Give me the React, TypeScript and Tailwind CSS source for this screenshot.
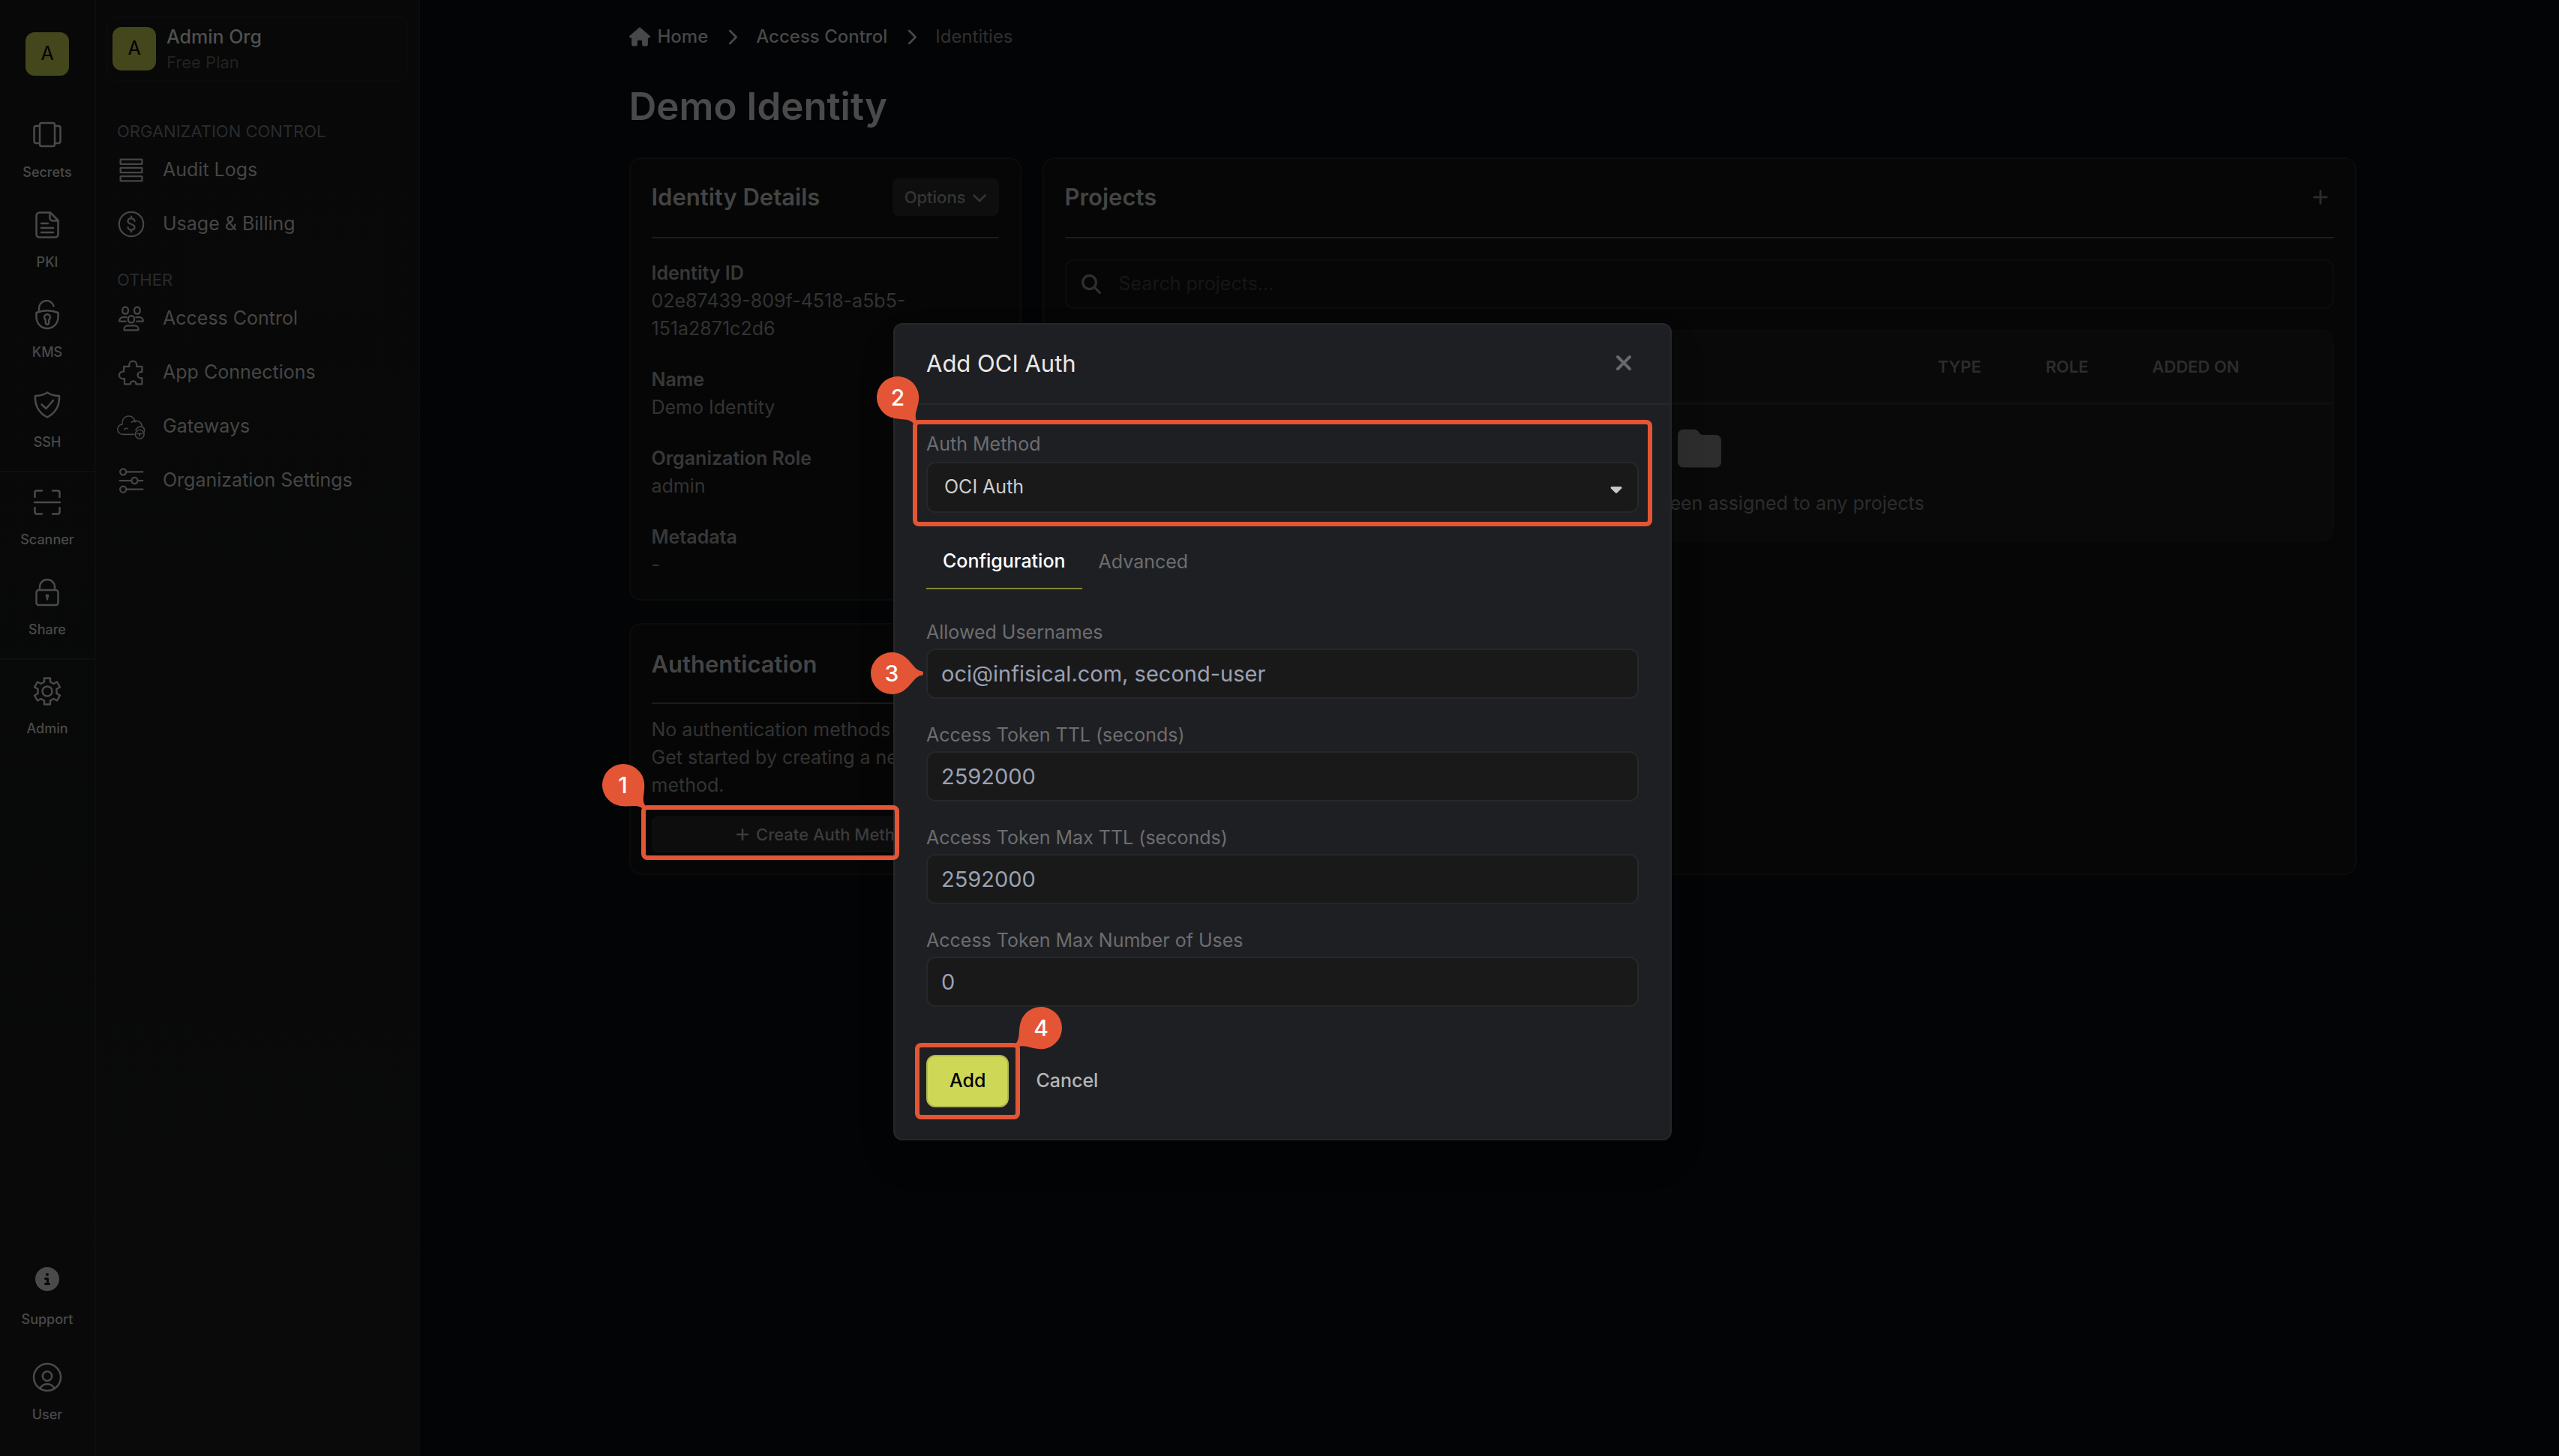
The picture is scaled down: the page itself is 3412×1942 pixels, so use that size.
import React from "react";
import { FaHouse, FaMagnifyingGlass, FaXmark, FaPlus, FaFolder, FaCircleInfo, FaCaretDown, FaChevronRight, FaChevronDown } from "react-icons/fa6";

type IconName =
  | "secrets" | "pki" | "kms" | "ssh" | "scanner" | "share" | "admin" | "user"
  | "logs" | "billing" | "access" | "puzzle" | "gateway" | "settings";

const art: Record<IconName, React.ReactNode> = {
  secrets: (
    <>
      <rect x="10" y="4" width="20" height="31" rx="2.5" />
      <path d="M10 8H5a2.500 2.500 0 0 0-2.500 2.500V28.500A2.500 2.500 0 0 0 5 31h5M30 8h5a2.500 2.500 0 0 1 2.500 2.500V28.500A2.500 2.500 0 0 1 35 31h-5" />
    </>
  ),
  pki: (
    <>
      <path d="M24 3.500H9.500a4 4 0 0 0-4 4v25a4 4 0 0 0 4 4h21a4 4 0 0 0 4-4V14z" />
      <path d="M23.500 3.500V11a3.500 3.500 0 0 0 3.500 3.500h7.500M12 18h9M12 24h16M12 30h16" />
    </>
  ),
  kms: (
    <>
      <path d="M5.500 17q14.500-5.500 29 0v6a14.500 15 0 0 1-29 0z" />
      <path d="M9 15V11.500a10 10 0 0 1 19.500-3.500" />
      <path d="M17.800 26.500a4 4 0 1 1 4.400 0v4a2.200 2.200 0 0 1-4.400 0z" />
    </>
  ),
  ssh: (
    <>
      <path d="M20 3.500q7 4.500 16 4.500.5 9-3 16-4 8-13 12.500Q11 32 7 24 3.500 17 4 8q9 0 16-4.500z" />
      <path d="m12.500 19.500 6 5.500L28 14" />
    </>
  ),
  scanner: (
    <path d="M3.500 13V7a2.500 2.500 0 0 1 2.500-2.500h7M27 4.500h7A2.500 2.500 0 0 1 36.500 7v6M36.500 27v6a2.500 2.500 0 0 1-2.500 2.500h-7M13 35.500H6A2.500 2.500 0 0 1 3.500 33v-6M3 20h34" />
  ),
  share: (
    <>
      <rect x="5.500" y="17" width="29" height="20" rx="3" />
      <path d="M10 17v-4a10 10 0 0 1 20 0v4M20 25.500v4" />
      <circle cx="20" cy="25" r="1.200" />
    </>
  ),
  admin: (
    <>
      <path d="M16 2.500h8v5l4.500 2.500 4.500-2.500 4 7-4.500 2.500v6l4.500 2.500-4 7-4.500-2.500-4.500 2.500v5h-8v-5L11.500 30 7 32.500l-4-7L7.500 23v-6L3 14.500l4-7 4.500 2.500L16 7.500z" />
      <circle cx="20" cy="20" r="6.500" />
    </>
  ),
  user: (
    <>
      <circle cx="20" cy="20" r="18" />
      <circle cx="20" cy="18.500" r="6.200" />
      <path d="M10.500 35a10.500 10.500 0 0 1 19 0" />
    </>
  ),
  logs: (
    <>
      <rect x="4" y="4" width="32" height="7" rx=".5" />
      <rect x="4" y="16.500" width="32" height="7" rx=".5" />
      <rect x="4" y="29" width="32" height="7" rx=".5" />
    </>
  ),
  billing: (
    <>
      <circle cx="20" cy="20" r="18" />
      <path d="M25 15.500a5 4 0 0 0-5-4c-3 0-5 1.600-5 4 0 5.500 10 3.500 10 9 0 2.400-2 4-5 4a5 4 0 0 1-5-4M20 8.500v3M20 28.500v3" />
    </>
  ),
  access: (
    <>
      <rect x="7" y="3" width="8.500" height="10" rx="4" />
      <rect x="24.500" y="3" width="8.500" height="10" rx="4" />
      <rect x="15.500" y="16" width="9" height="10" rx="4" />
      <path d="M13 18H7.500A5 5 0 0 0 2.500 23v1H12M27 18h5.500a5 5 0 0 1 5 5v1H28M9.500 37v-1.500a5 5 0 0 1 5-5h11a5 5 0 0 1 5 5V37z" />
    </>
  ),
  puzzle: (
    <path d="M9 11h8V8.500a5.500 5.500 0 0 1 11 0V11h8v8h-2a4 4 0 0 0 0 9h2v9h-9v-2a4.500 4.500 0 0 0-8 0v2h-9v-8H7.500a5 5 0 0 1 0-10.500H9z" />
  ),
  gateway: (
    <g strokeWidth="1.800">
      <path d="M24 31.500H7.500a7.500 7.500 0 0 1-.5-15 9.500 9.500 0 0 1 18.500-5 9 9 0 0 1 10.500 9M20.500 13.500q3-2.500 6-.5M10 24.500q1.500-3 4.500-1.500" />
      <circle cx="32.500" cy="31.500" r="6.500" />
      <path d="M29 30.500h7M32.500 30.500v4M26.500 25q5-8 11-4 3.500 3.500 1 8" />
    </g>
  ),
  settings: (
    <>
      <circle cx="8" cy="7" r="4.500" />
      <circle cx="25" cy="20" r="4.500" />
      <circle cx="8" cy="33" r="4.500" />
      <path d="M12.500 7H37M3 20h17.500M29.500 20H37M12.500 33H37" />
    </>
  ),
};

function Icon({ name, className }: { name: IconName; className: string }) {
  return (
    <svg viewBox="0 0 40 40" fill="none" stroke="currentColor" strokeWidth="2.500" strokeLinecap="round" strokeLinejoin="round" className={className} aria-hidden="true">
      {art[name]}
    </svg>
  );
}

function RailItem({ icon, label }: { icon: IconName; label: string }) {
  return (
    <a href="#" className="flex h-[120px] w-full flex-col items-center gap-4 pt-3 text-[#4a4a4a]">
      <Icon name={icon} className="size-10" />
      <span className="text-[18px] leading-7 font-medium">{label}</span>
    </a>
  );
}

function NavItem({ icon, label }: { icon: IconName; label: string }) {
  return (
    <a href="#" className="flex h-[72px] items-center gap-6 pl-[29px] text-[25px] text-[#464646]">
      <Icon name={icon} className="size-9 overflow-visible" />
      {label}
    </a>
  );
}

function Detail({ label, value }: { label: string; value: string }) {
  return (
    <div className="text-[25px] leading-[37px] text-[#333]">
      <dt className="font-semibold text-[#383838]">{label}</dt>
      <dd>{value}</dd>
    </div>
  );
}

function Bubble({ n, className, tail }: { n: number; className: string; tail: string }) {
  return (
    <span className={`absolute z-50 flex size-14 items-center justify-center ${className}`}>
      <svg viewBox="-28 -28 56 56" className={`absolute inset-0 size-14 overflow-visible ${tail}`} aria-hidden="true">
        <path d="M0-28C23-28 27-5 39-3A3 3 0 0 1 39 3C27 5 23 28 0 28A28 28 0 0 1 0-28Z" fill="#e35534" />
      </svg>
      <span className="relative text-[30px] leading-none font-medium text-white">{n}</span>
    </span>
  );
}

function Field({ id, label, value, children }: { id: string; label: string; value: string; children?: React.ReactNode }) {
  return (
    <div className="relative mb-[30px]">
      <label htmlFor={id} className="block pb-1 text-[25px] leading-9 text-[#6c6d70]">{label}</label>
      <input id={id} defaultValue={value} className="block h-[67px] w-full rounded-xl border-2 border-[#26272a] bg-[#19191a] px-[18px] text-[29px] text-[#9aa1b2] outline-none" />
      {children}
    </div>
  );
}

function Rail() {
  return (
    <nav className="flex w-32 shrink-0 flex-col items-center border-r-2 border-[#0c0d0d] bg-linear-to-b from-[#070807] to-[#09090a] pt-[43px]">
      <div className="mb-[47px] flex size-[58px] items-center justify-center rounded-xl bg-[#44461c] text-[25px] text-black">A</div>
      <RailItem icon="secrets" label="Secrets" />
      <RailItem icon="pki" label="PKI" />
      <RailItem icon="kms" label="KMS" />
      <RailItem icon="ssh" label="SSH" />
      <div className="w-full border-t-2 border-[#0e0f0f] pt-2">
        <RailItem icon="scanner" label="Scanner" />
        <RailItem icon="share" label="Share" />
      </div>
      <div className="w-full border-t-2 border-[#0e0f0f] pt-[10px]">
        <RailItem icon="admin" label="Admin" />
      </div>
      <div className="mt-auto w-full pb-[17px]">
        <a href="#" className="flex h-32 flex-col items-center gap-6 pt-[13px] text-[#4a4a4a]">
          <FaCircleInfo className="size-8" />
          <span className="text-[18px] leading-7 font-medium">Support</span>
        </a>
        <RailItem icon="user" label="User" />
      </div>
    </nav>
  );
}

function Sidebar() {
  return (
    <aside className="w-[432px] shrink-0 border-r-2 border-[#0b0c0e] bg-linear-to-b from-[#070807] to-[#0a0a0b] pt-[22px]">
      <button className="mx-[14px] flex h-[86px] w-[402px] items-center gap-[14px] rounded-xl border-2 border-[#0b0b0b] px-1.5 text-left">
        <span className="flex size-[58px] items-center justify-center rounded-xl bg-[#44461c] text-[25px] text-black">A</span>
        <span className="flex flex-col">
          <span className="text-[25px] leading-9 font-medium text-[#505050]">Admin Org</span>
          <span className="text-[22px] leading-8 text-[#222]">Free Plan</span>
        </span>
      </button>
      <h2 className="mt-[51px] pl-7 text-[22px] leading-8 text-[#2a2b2f]">ORGANIZATION CONTROL</h2>
      <NavItem icon="logs" label="Audit Logs" />
      <NavItem icon="billing" label="Usage & Billing" />
      <h2 className="mt-[22px] pl-7 text-[22px] leading-8 text-[#2a2b2f]">OTHER</h2>
      <NavItem icon="access" label="Access Control" />
      <NavItem icon="puzzle" label="App Connections" />
      <NavItem icon="gateway" label="Gateways" />
      <NavItem icon="settings" label="Organization Settings" />
    </aside>
  );
}

function Modal() {
  return (
    <div className="absolute inset-0 z-40 flex items-center justify-center pt-2.5 pl-2">
      <section role="dialog" aria-label="Add OCI Auth" className="w-full max-w-[1038px] rounded-xl border-2 border-[#26272a] bg-[#1e1f23] shadow-2xl">
        <header className="flex h-[107px] items-center justify-between border-b-2 border-[#26272a] px-[42px]">
          <h2 className="text-[31px] text-[#e8e8e9]">Add OCI Auth</h2>
          <button aria-label="Close" className="mr-1 mb-1 text-[#69696c]"><FaXmark className="size-8" /></button>
        </header>
        <form className="px-[42px] pt-[34px] pb-[42px]">
          <div className="relative">
            <label htmlFor="method" className="block pb-1.5 text-[25px] leading-9 text-[#6c6d70]">Auth Method</label>
            <select id="method" className="block h-[68px] w-full appearance-none rounded-xl border-2 border-[#26272a] bg-[#19191a] px-[22px] text-[25px] text-[#cdcdce]">
              <option>OCI Auth</option>
            </select>
            <FaCaretDown className="absolute right-[18px] bottom-5 size-6 text-[#c8c8ca]" />
            <div className="absolute -inset-x-[18px] -top-[14px] -bottom-[18px] rounded-lg border-6 border-[#e35534]" />
            <Bubble n={2} className="-top-[72px] -left-[66px]" tail="rotate-[55deg]" />
          </div>
          <div role="tablist" className="mt-[30px] mb-[39px] flex h-[72px] text-[25px]">
            <button type="button" role="tab" aria-selected="true" className="border-b-2 border-[#85873a] px-[22px] font-medium text-white">Configuration</button>
            <button type="button" role="tab" aria-selected="false" className="px-[22px] text-[#6c6d70]">Advanced</button>
          </div>
          <Field id="users" label="Allowed Usernames" value="oci@infisical.com, second-user">
            <Bubble n={3} className="bottom-[6px] -left-[74px]" tail="rotate-0" />
          </Field>
          <Field id="ttl" label="Access Token TTL (seconds)" value="2592000" />
          <Field id="maxttl" label="Access Token Max TTL (seconds)" value="2592000" />
          <Field id="uses" label="Access Token Max Number of Uses" value="0" />
          <div className="flex items-center gap-9 pt-[34px] text-[25px] font-medium">
            <div className="relative">
              <button type="button" className="h-[70px] rounded-xl border-2 border-[#b0b74f] bg-[#ced856] px-[29px] text-black">Add</button>
              <div className="absolute -inset-x-[15px] -inset-y-4 rounded-lg border-6 border-[#e35534]" />
              <Bubble n={4} className="-top-[64px] left-[125px]" tail="rotate-[144deg]" />
            </div>
            <button type="button" className="text-[#b5b5b7]">Cancel</button>
          </div>
        </form>
      </section>
    </div>
  );
}

export default function App() {
  return (
    <div className="relative flex min-h-screen bg-[#030406] font-['Inter',sans-serif]">
      <Rail />
      <Sidebar />
      <main className="min-w-0 flex-1 pl-2">
        <div className="mx-auto max-w-[2303px]">
          <nav aria-label="Breadcrumb" className="flex items-center gap-[25px] pt-[31px] text-[24px] leading-9 font-medium text-[#484848]">
            <a href="#" className="flex items-center gap-[10px]"><FaHouse className="size-7" />Home</a>
            <FaChevronRight className="h-[23px] w-[14px]" />
            <a href="#">Access Control</a>
            <FaChevronRight className="h-[23px] w-[14px]" />
            <span className="font-normal text-[#303030]">Identities</span>
          </nav>
          <h1 className="mt-[37px] mb-[30px] text-[51px] leading-[76px] font-semibold text-[#4a4a4a]">Demo Identity</h1>
          <div className="flex gap-7">
            <div className="flex w-[523px] shrink-0 flex-col gap-[30px]">
              <section className="rounded-2xl border-2 border-[#0c0c0c] bg-[#060606] px-7 pt-[26px] pb-[27px]">
                <div className="flex h-[80px] items-start justify-between border-b-2 border-[#1c1c1c]">
                  <h2 className="text-[31px] leading-[50px] font-semibold text-[#444]">Identity Details</h2>
                  <button className="flex h-[50px] items-center gap-2 rounded-lg bg-[#0e0e0f] px-4 text-[22px] font-medium text-[#363636]">Options<FaChevronDown className="size-5" /></button>
                </div>
                <dl className="flex flex-col gap-[31px] pt-7">
                  <Detail label="Identity ID" value="02e87439-809f-4518-a5b5-151a2871c2d6" />
                  <Detail label="Name" value="Demo Identity" />
                  <Detail label="Organization Role" value="admin" />
                  <Detail label="Metadata" value="-" />
                </dl>
              </section>
              <section className="rounded-2xl border-2 border-[#0c0c0c] bg-[#060606] px-7 pt-[26px] pb-7">
                <h2 className="h-[80px] border-b-2 border-[#1c1c1c] text-[31px] leading-[54px] font-semibold text-[#444]">Authentication</h2>
                <p className="pt-4 pb-[23px] text-[25px] leading-[37px] text-[#333]">No authentication methods configured. Get started by creating a new auth method.</p>
                <div className="relative">
                  <button className="flex h-12 w-full items-center justify-center gap-2 rounded-lg border-2 border-[#0f0f0f] bg-[#0d0d0d] text-[22px] font-medium text-[#3c3c3c]"><FaPlus className="size-5" />Create Auth Method</button>
                  <div className="absolute -top-[15px] -bottom-[10px] -left-[14px] z-50 w-[344px] rounded-lg border-6 border-[#e35534]" />
                  <Bubble n={1} className="-top-[70px] -left-[66px]" tail="rotate-[47deg]" />
                </div>
              </section>
            </div>
            <section className="min-w-0 flex-1 rounded-2xl border-2 border-[#0c0c0c] bg-[#060606] px-7 pt-[26px]">
              <div className="flex h-[80px] items-start justify-between border-b-2 border-[#1c1c1c]">
                <h2 className="text-[31px] leading-[50px] font-semibold text-[#444]">Projects</h2>
                <button aria-label="Add project" className="flex h-[50px] items-center pr-1.5 text-[#2a2b2a]"><FaPlus className="size-6" /></button>
              </div>
              <label className="mt-7 flex h-[66px] items-center gap-6 rounded-xl border-2 border-[#0c0c0c] bg-[#060606] px-5 text-[#2f2f32]">
                <FaMagnifyingGlass className="size-[26px]" />
                <input aria-label="Search projects" placeholder="Search projects..." className="flex-1 bg-transparent text-[25px] outline-none placeholder:text-[#151617]" />
              </label>
              <div className="mt-7 overflow-hidden rounded-2xl border-2 border-[#0b0b0b] bg-[#090909]">
                <table className="w-full text-left text-[#2c2d2c]">
                  <thead>
                    <tr className="h-24 border-b-4 border-[#0e0e0e] text-[22px]">
                      <th className="pl-10 font-semibold">NAME</th>
                      <th className="w-[144px] font-semibold">TYPE</th>
                      <th className="w-[142px] font-semibold">ROLE</th>
                      <th className="w-[240px] font-semibold">ADDED ON</th>
                    </tr>
                  </thead>
                  <tbody>
                    <tr>
                      <td colSpan={4} className="h-[182px] text-center text-[25px]">
                        <FaFolder className="mx-auto mb-[26px] size-[58px]" />
                        This identity has not been assigned to any projects
                      </td>
                    </tr>
                  </tbody>
                </table>
              </div>
            </section>
          </div>
        </div>
      </main>
      <Modal />
    </div>
  );
}
